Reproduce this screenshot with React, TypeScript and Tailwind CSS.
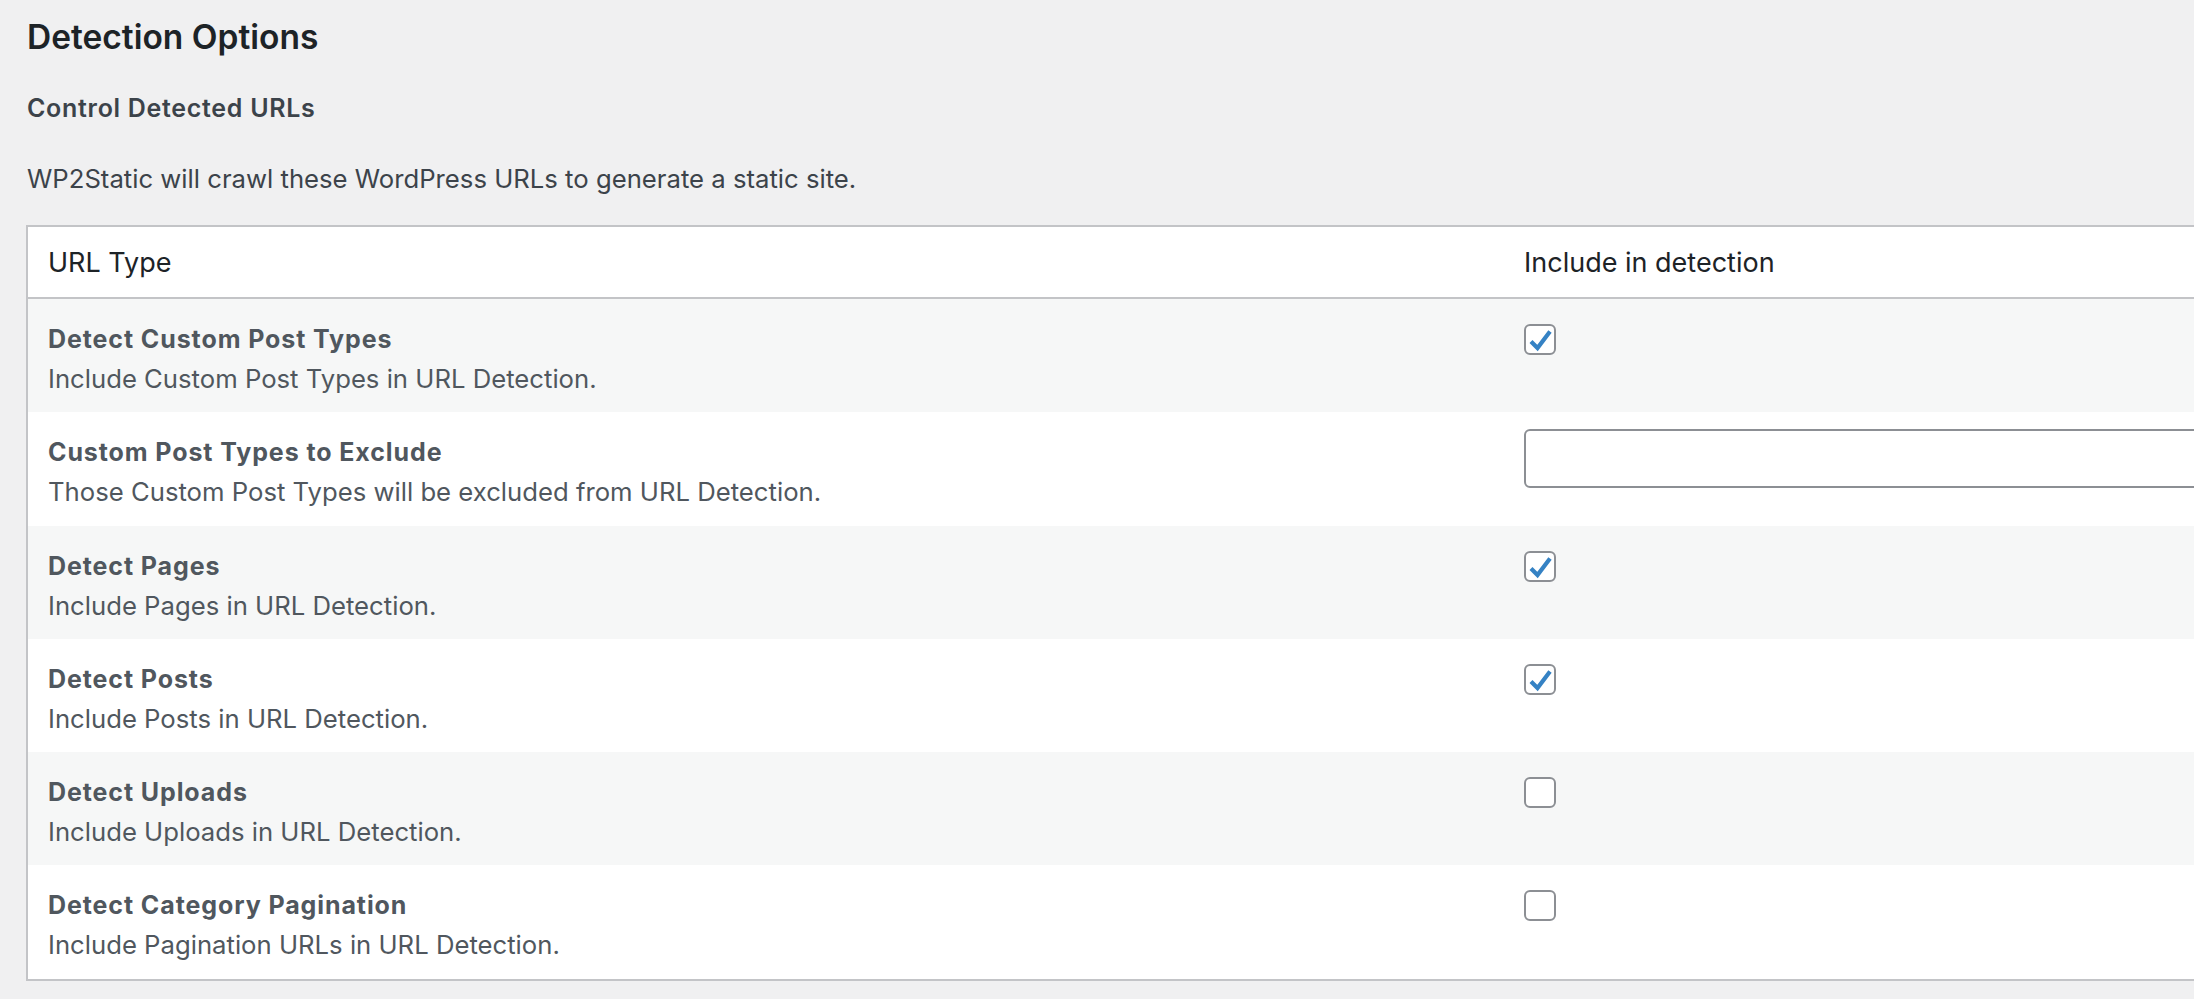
import { useState } from "react";

type Row = {
  title: string;
  description: string;
  kind: "checkbox" | "text";
  checked?: boolean;
};

const rows: Row[] = [
  {
    title: "Detect Custom Post Types",
    description: "Include Custom Post Types in URL Detection.",
    kind: "checkbox",
    checked: true,
  },
  {
    title: "Custom Post Types to Exclude",
    description: "Those Custom Post Types will be excluded from URL Detection.",
    kind: "text",
  },
  {
    title: "Detect Pages",
    description: "Include Pages in URL Detection.",
    kind: "checkbox",
    checked: true,
  },
  {
    title: "Detect Posts",
    description: "Include Posts in URL Detection.",
    kind: "checkbox",
    checked: true,
  },
  {
    title: "Detect Uploads",
    description: "Include Uploads in URL Detection.",
    kind: "checkbox",
    checked: false,
  },
  {
    title: "Detect Category Pagination",
    description: "Include Pagination URLs in URL Detection.",
    kind: "checkbox",
    checked: false,
  },
];

function Checkbox({ checked, onToggle }: { checked: boolean; onToggle: () => void }) {
  return (
    <button
      type="button"
      role="checkbox"
      aria-checked={checked}
      onClick={onToggle}
      className="flex h-[31px] w-[32px] items-center justify-center rounded-[6px] border-2 border-[#8c8f94] bg-white"
    >
      {checked && (
        <svg width="28" height="27" viewBox="0 0 28 27" className="block">
          <path
            d="M5 15.5 L11.5 22 L24 5.5"
            fill="none"
            stroke="#3582c4"
            strokeWidth="4.2"
            strokeLinecap="butt"
            strokeLinejoin="miter"
          />
        </svg>
      )}
    </button>
  );
}

export default function App() {
  const [values, setValues] = useState<boolean[]>(rows.map((r) => !!r.checked));

  return (
    <div
      className="h-[999px] w-[2194px] overflow-hidden bg-[#f0f0f1] pl-[26px] pt-[17px]"
      style={{ fontFamily: "Inter, 'Noto Sans', sans-serif" }}
    >
      <h2 className="pl-[1px] text-[33.5px] leading-[40px] font-semibold text-[#1d2327]">
        Detection Options
      </h2>
      <h3 className="mt-[35px] pl-[1px] text-[25px] leading-[32px] font-semibold tracking-[0.7px] text-[#3c434a]">
        Control Detected URLs
      </h3>
      <p className="mt-[38px] pl-[1px] text-[25.7px] leading-[34px] text-[#3c434a]">
        WP2Static will crawl these WordPress URLs to generate a static site.
      </p>

      <div className="mt-[29px] w-[2300px] border-2 border-[#c3c4c7] bg-white">
        <div className="grid h-[72px] grid-cols-[1476px_1fr] items-center border-b-2 border-[#c3c4c7] pt-[2px] text-[27px] text-[#1d2327]">
          <div className="pl-[20px]">URL Type</div>
          <div className="pl-[20px]">Include in detection</div>
        </div>
        {rows.map((row, i) => (
          <div
            key={row.title}
            className={`grid h-[113.3px] grid-cols-[1476px_1fr] ${i % 2 === 0 ? "bg-[#f6f7f7]" : "bg-white"}`}
          >
            <div className="pl-[20px] pt-[26px] text-[#50575e]">
              <div className="text-[25px] leading-[28px] font-bold tracking-[0.9px]">{row.title}</div>
              <div className="mt-[9px] text-[25.7px] leading-[34px]">{row.description}</div>
            </div>
            <div className="pl-[20px]">
              {row.kind === "checkbox" ? (
                <div className="pt-[25px]">
                  <Checkbox
                    checked={values[i]}
                    onToggle={() =>
                      setValues((v) => v.map((x, j) => (j === i ? !x : x)))
                    }
                  />
                </div>
              ) : (
                <div className="pt-[17px]">
                  <input
                    type="text"
                    className="block h-[59px] w-[800px] rounded-[6px] border-2 border-[#8c8f94] bg-white px-3 text-[25px] outline-none"
                  />
                </div>
              )}
            </div>
          </div>
        ))}
      </div>
    </div>
  );
}
